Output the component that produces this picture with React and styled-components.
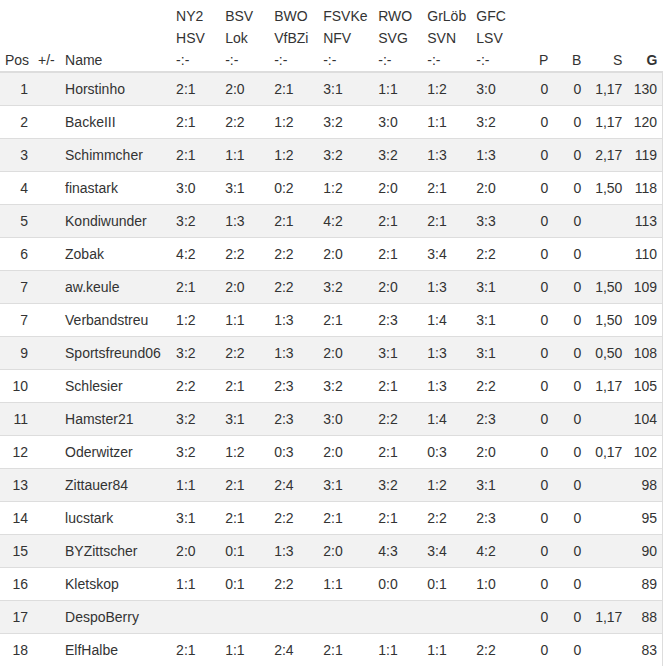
import React from 'react'
import { styled, createGlobalStyle } from 'styled-components'

const GlobalStyle = createGlobalStyle`
  body {
    margin: 0;
    background: #fff;
    font-family: "Liberation Sans", Arial, sans-serif;
    font-size: 14px;
    color: #333;
  }
`;

const matches = [
  ['NY2', 'HSV'],
  ['BSV', 'Lok'],
  ['BWO', 'VfBZi'],
  ['FSVKe', 'NFV'],
  ['RWO', 'SVG'],
  ['GrLöb', 'SVN'],
  ['GFC', 'LSV'],
];

const rows = [
  ['1', 'Horstinho', ['2:1', '2:0', '2:1', '3:1', '1:1', '1:2', '3:0'], '1,17', '130'],
  ['2', 'BackeIII', ['2:1', '2:2', '1:2', '3:2', '3:0', '1:1', '3:2'], '1,17', '120'],
  ['3', 'Schimmcher', ['2:1', '1:1', '1:2', '3:2', '3:2', '1:3', '1:3'], '2,17', '119'],
  ['4', 'finastark', ['3:0', '3:1', '0:2', '1:2', '2:0', '2:1', '2:0'], '1,50', '118'],
  ['5', 'Kondiwunder', ['3:2', '1:3', '2:1', '4:2', '2:1', '2:1', '3:3'], '', '113'],
  ['6', 'Zobak', ['4:2', '2:2', '2:2', '2:0', '2:1', '3:4', '2:2'], '', '110'],
  ['7', 'aw.keule', ['2:1', '2:0', '2:2', '3:2', '2:0', '1:3', '3:1'], '1,50', '109'],
  ['7', 'Verbandstreu', ['1:2', '1:1', '1:3', '2:1', '2:3', '1:4', '3:1'], '1,50', '109'],
  ['9', 'Sportsfreund06', ['3:2', '2:2', '1:3', '2:0', '3:1', '1:3', '3:1'], '0,50', '108'],
  ['10', 'Schlesier', ['2:2', '2:1', '2:3', '3:2', '2:1', '1:3', '2:2'], '1,17', '105'],
  ['11', 'Hamster21', ['3:2', '3:1', '2:3', '3:0', '2:2', '1:4', '2:3'], '', '104'],
  ['12', 'Oderwitzer', ['3:2', '1:2', '0:3', '2:0', '2:1', '0:3', '2:0'], '0,17', '102'],
  ['13', 'Zittauer84', ['1:1', '2:1', '2:4', '3:1', '3:2', '1:2', '3:1'], '', '98'],
  ['14', 'lucstark', ['3:1', '2:1', '2:2', '2:1', '2:1', '2:2', '2:3'], '', '95'],
  ['15', 'BYZittscher', ['2:0', '0:1', '1:3', '2:0', '4:3', '3:4', '4:2'], '', '90'],
  ['16', 'Kletskop', ['1:1', '0:1', '2:2', '1:1', '0:0', '0:1', '1:0'], '', '89'],
  ['17', 'DespoBerry', ['', '', '', '', '', '', ''], '1,17', '88'],
  ['18', 'ElfHalbe', ['2:1', '1:1', '2:4', '2:1', '1:1', '1:1', '2:2'], '', '83'],
];

// column widths, taken from the screenshot
const widths = [33, 27, 111, 49, 49, 49, 55, 49, 49, 49, 33, 33, 41, 35];

function App() {
  return (
    <>
      <GlobalStyle />
      <Table>
        <colgroup>
          {widths.map((w, i) => <col key={i} style={{ width: w }} />)}
        </colgroup>
        <thead>
          <tr>
            <Th $right>Pos</Th>
            <Th>+/-</Th>
            <Th>Name</Th>
            {matches.map(([a, b]) => (
              <Th key={a}>
                {a}<br />{b}<br />-:-
              </Th>
            ))}
            <Th $right>P</Th>
            <Th $right>B</Th>
            <Th $right>S</Th>
            <Th $right $bold>G</Th>
          </tr>
        </thead>
        <tbody>
          {rows.map(([pos, name, res, s, g], i) => (
            <Row key={i} $odd={i % 2 === 0}>
              <Td $right>{pos}</Td>
              <Td></Td>
              <Td>{name}</Td>
              {res.map((r, j) => <Td key={j}>{r}</Td>)}
              <Td $right>0</Td>
              <Td $right>0</Td>
              <Td $right>{s}</Td>
              <Td $right $edge>{g}</Td>
            </Row>
          ))}
        </tbody>
      </Table>
    </>
  )
}

export default App

const Table = styled.table`
width: 663px;
table-layout: fixed;
border-collapse: collapse;
border-spacing: 0;
`;

const Th = styled.th`
padding: 5px 5px 0;
line-height: 22px;
height: 66px;
vertical-align: bottom;
text-align: ${p => p.$right ? 'right' : 'left'};
font-weight: ${p => p.$bold ? 700 : 400};
white-space: nowrap;
border-bottom: 2px solid #ddd;
`;

const Row = styled.tr`
background: ${p => p.$odd ? '#f2f2f2' : '#fff'};
`;

const Td = styled.td`
height: 20px;
padding: 6px 5px;
line-height: 20px;
border-top: 1px solid #ddd;
border-right: ${p => p.$edge ? '1px solid #ddd' : 'none'};
text-align: ${p => p.$right ? 'right' : 'left'};
white-space: nowrap;
overflow: hidden;
`;
